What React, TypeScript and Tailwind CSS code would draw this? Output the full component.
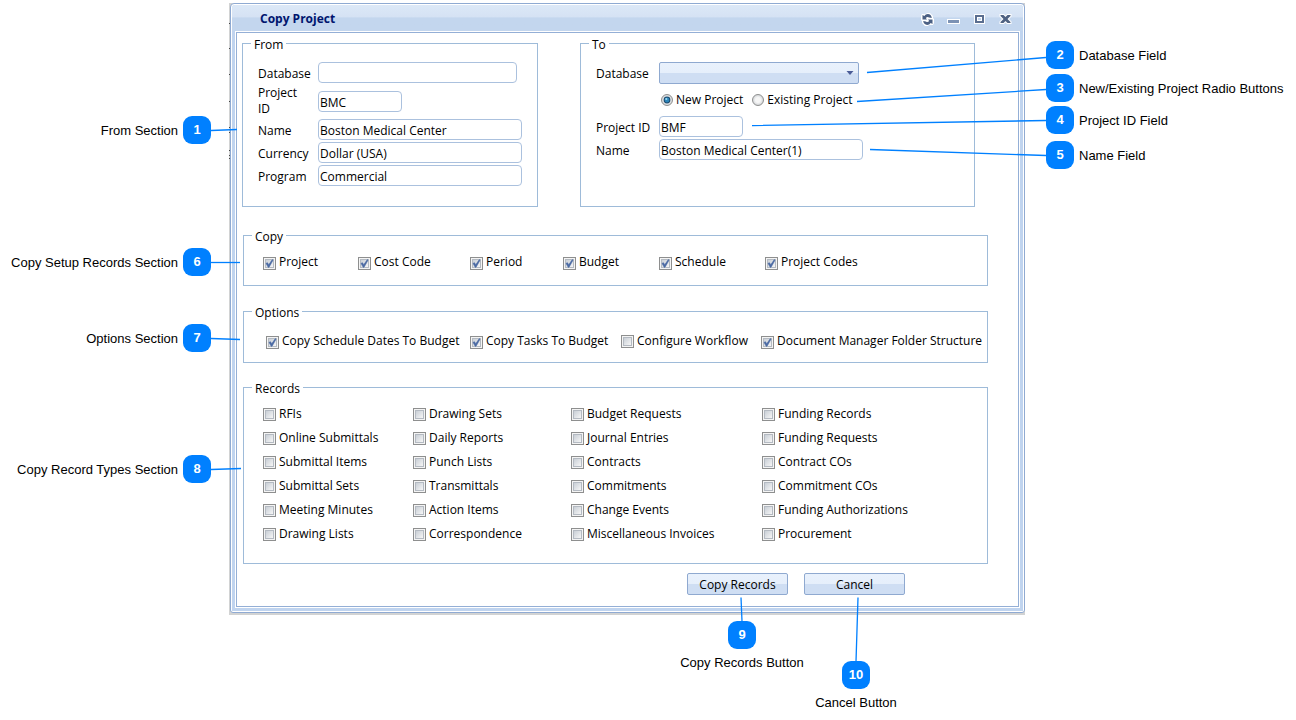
import type { ReactNode } from 'react';

type CheckItem = { label: string; checked?: boolean };

const copyItems: CheckItem[] = [
  { label: 'Project', checked: true },
  { label: 'Cost Code', checked: true },
  { label: 'Period', checked: true },
  { label: 'Budget', checked: true },
  { label: 'Schedule', checked: true },
  { label: 'Project Codes', checked: true },
];

const optionItems: CheckItem[] = [
  { label: 'Copy Schedule Dates To Budget', checked: true },
  { label: 'Copy Tasks To Budget', checked: true },
  { label: 'Configure Workflow' },
  { label: 'Document Manager Folder Structure', checked: true },
];

const recordItems = [
  'RFIs', 'Drawing Sets', 'Budget Requests', 'Funding Records',
  'Online Submittals', 'Daily Reports', 'Journal Entries', 'Funding Requests',
  'Submittal Items', 'Punch Lists', 'Contracts', 'Contract COs',
  'Submittal Sets', 'Transmittals', 'Commitments', 'Commitment COs',
  'Meeting Minutes', 'Action Items', 'Change Events', 'Funding Authorizations',
  'Drawing Lists', 'Correspondence', 'Miscellaneous Invoices', 'Procurement',
];

const Group = ({ title, className, children }: { title: string; className: string; children: ReactNode }) => (
  <fieldset className={`relative border border-[#9ebbd9] ${className}`}>
    <legend className="absolute -top-[7px] left-2 bg-white px-[3px] leading-4">{title}</legend>
    {children}
  </fieldset>
);

const Check = ({ label, checked = false }: CheckItem) => (
  <label className="flex items-center gap-[3px] whitespace-nowrap">
    <span className={checked ? 'relative mt-[3px] size-[13px] shrink-0' : 'relative size-[13px] shrink-0'}>
      <input
        type="checkbox"
        defaultChecked={checked}
        className="peer block size-[13px] appearance-none border border-[#8e8f8f] bg-[#f4f4f4]"
      />
      <span className="pointer-events-none absolute inset-[2px] border border-[#b4bac2] bg-linear-to-br from-[#c9cfd6] to-[#f6f6f6]" />
      <svg
        viewBox="0 0 13 13"
        className="pointer-events-none absolute inset-0 hidden size-[13px] peer-checked:block"
      >
        <path d="M3 6.3 4.6 5.8 5.7 7.8 9.3 2.6 10 3.2 6 10.3 5.2 10.3Z" fill="#4a69a3" stroke="#4a69a3" strokeWidth="0.6" />
      </svg>
    </span>
    {label}
  </label>
);

const Field = ({ id, label, value, width }: { id: string; label: string; value: string; width: string }) => (
  <>
    <label htmlFor={id} className="pt-0.5 leading-4">
      {label}
    </label>
    <input
      id={id}
      type="text"
      defaultValue={value}
      className={`h-[21px] rounded-[4px] border border-[#abc1de] bg-white pt-0.5 pl-px ${width}`}
    />
  </>
);

const Radio = ({ label, checked = false }: CheckItem) => (
  <label className="flex items-center gap-[3px] whitespace-nowrap">
    <span className="relative size-3 shrink-0">
      <input
        type="radio"
        name="projectMode"
        defaultChecked={checked}
        className="peer block size-3 appearance-none rounded-full border border-[#8e8f8f] bg-[radial-gradient(circle,#f6f6f6_35%,#cdd0d3_80%)]"
      />
      <svg viewBox="0 0 12 12" className="pointer-events-none absolute inset-0 hidden size-3 peer-checked:block">
        <circle cx="6" cy="6" r="3.4" fill="#1d4a6e" />
        <circle cx="6" cy="6" r="2.4" fill="#2c86ba" />
        <circle cx="5.3" cy="5" r="1.1" fill="#9bd9f2" />
      </svg>
    </span>
    {label}
  </label>
);

const WindowButton = ({ label, children }: { label: string; children: ReactNode }) => (
  <button type="button" aria-label={label} className="size-[13px]">
    <svg viewBox="0 0 13 13" className="size-[13px]">
      {children}
    </svg>
  </button>
);

const TitleBar = () => (
  <header className="flex h-[26px] items-center justify-between rounded-t-[3px] bg-linear-to-b from-[#dce8f7] from-0% via-[#d5e2f4] via-45% to-[#c3d6ee] to-50% pr-[11px] pl-7">
    <h1 className="pt-0.5 font-bold text-[#00156e]">Copy Project</h1>
    <div className="flex gap-[13px] pt-[3px]">
      <WindowButton label="Reload">
        <path d="M1 1h4l1-1h3l3 3v2l1 1v4l-1 2H8l-1 1H4L1 10V8L0 7V3z" fill="#fff" />
        <path d="M1.5 2v4.5H6L4.8 5Q6.5 3.4 8 4.6L10.8 5Q10.2 1.2 6.8 1.1 4.6 1.1 3.3 3.1Z" fill="#4b6084" />
        <path d="M11.5 11V6.5H7L8.2 8Q6.5 9.6 5 8.4L2.2 8Q2.8 11.8 6.2 11.9 8.4 11.9 9.7 9.9Z" fill="#4b6084" />
      </WindowButton>
      <WindowButton label="Minimize">
        <rect x="0" y="6" width="13" height="5" fill="#fff" />
        <rect x="1" y="7" width="11" height="3" fill="#7c92b4" />
      </WindowButton>
      <WindowButton label="Maximize">
        <rect x="1" y="1" width="11" height="10" fill="#fff" />
        <rect x="2" y="2" width="9" height="8" fill="#5a6e90" />
        <rect x="4" y="4" width="5" height="4" fill="#fff" />
        <rect x="5" y="5" width="3" height="2" fill="#c3d6ee" />
      </WindowButton>
      <WindowButton label="Close">
        <path d="M0.5 1h4.5l1.5 1.5L8 1h4.5v2.5L10 6l2.5 2.5V11H8L6.5 9.5 5 11H.5V8.5L3 6 .5 3.5z" fill="#fff" />
        <path d="M1.5 2h3l2 2 2-2h3v1L8.5 6l3 3v1h-3l-2-2-2 2h-3V9l3-3-3-3z" fill="#4f6282" />
      </WindowButton>
    </div>
  </header>
);

const glossy =
  'rounded-[2px] border border-[#8fa9d0] bg-linear-to-b from-[#e9f1fc] from-0% via-[#e6effb] via-48% to-[#cfdef3] to-52%';

const CopyDialog = () => (
  <div className="bg-[#d2d3d3] pb-0.5 pl-px">
    <div className="rounded-t-[4px] rounded-b-[3px] border border-[#8faad2] bg-white p-px">
      <div className="rounded-t-[3px] bg-[#c0d4ef]">
        <TitleBar />
        <div className="px-[3px] pb-[3px]">
          <div className="border border-white">
            <form className="border border-[#94afd6] bg-white pb-[11px]">
              <div className="mt-[10px] mr-[43px] ml-[5px] flex gap-[42px]">
                <Group title="From" className="w-[296px] shrink-0 pt-[18px] pb-5 pl-[15px]">
                  <div className="grid grid-cols-[60px_204px] items-center gap-y-0.5">
                    <Field id="fromDatabase" label="Database" value="" width="w-[199px]" />
                    <label htmlFor="fromProjectId" className="w-10 leading-4">
                      Project ID
                    </label>
                    <input
                      id="fromProjectId"
                      type="text"
                      defaultValue="BMC"
                      className="h-[21px] w-[84px] rounded-[4px] border border-[#abc1de] bg-white pt-0.5 pl-px"
                    />
                    <Field id="fromName" label="Name" value="Boston Medical Center" width="w-[204px]" />
                    <Field id="fromCurrency" label="Currency" value="Dollar (USA)" width="w-[204px]" />
                    <Field id="fromProgram" label="Program" value="Commercial" width="w-[204px]" />
                  </div>
                </Group>
                <Group title="To" className="flex-1 pt-[18px] pl-[15px]">
                  <div className="grid grid-cols-[63px_204px] items-center gap-y-0.5">
                    <label htmlFor="toDatabase" className="pt-px leading-4">
                      Database
                    </label>
                    <div className="relative w-[200px]">
                      <select id="toDatabase" className={`block h-[22px] w-full appearance-none ${glossy}`}>
                        <option value="" />
                      </select>
                      <svg viewBox="0 0 8 5" className="pointer-events-none absolute top-[9px] right-[5px] h-[5px] w-2">
                        <path d="M0.5 0h7L4 4z" fill="#4a5c97" />
                      </svg>
                    </div>
                    <div className="col-start-2 flex h-7 items-center gap-[9px] pl-0.5">
                      <Radio label="New Project" checked />
                      <Radio label="Existing Project" />
                    </div>
                    <Field id="toProjectId" label="Project ID" value="BMF" width="w-[84px]" />
                    <Field id="toName" label="Name" value="Boston Medical Center(1)" width="w-[204px]" />
                  </div>
                </Group>
              </div>

              <div className="mr-[30px] ml-[6px]">
                <Group title="Copy" className="mt-7 pt-[17px] pb-4 pl-[19px]">
                  <div className="grid h-4 grid-cols-[95px_112px_93px_96px_106px_auto] items-center">
                    {copyItems.map((item) => (
                      <Check key={item.label} {...item} />
                    ))}
                  </div>
                </Group>
                <Group title="Options" className="mt-[25px] pt-5 pb-[14px] pl-[22px]">
                  <div className="grid h-4 grid-cols-[204px_151px_140px_auto] items-center">
                    {optionItems.map((item) => (
                      <Check key={item.label} {...item} />
                    ))}
                  </div>
                </Group>
                <Group title="Records" className="mt-6 pt-[14px] pb-[17px] pl-[19px]">
                  <div className="grid auto-rows-[24px] grid-cols-[150px_158px_191px_auto] items-center">
                    {recordItems.map((label) => (
                      <Check key={label} label={label} />
                    ))}
                  </div>
                </Group>
              </div>

              <div className="mt-[9px] mr-[113px] flex justify-end gap-4">
                <button type="button" className={`h-[22px] w-[101px] pt-px ${glossy}`}>
                  Copy Records
                </button>
                <button type="button" className={`h-[22px] w-[101px] pt-px ${glossy}`}>
                  Cancel
                </button>
              </div>
            </form>
          </div>
        </div>
      </div>
    </div>
  </div>
);

const Badge = ({ n }: { n: number }) => (
  <span className="flex size-7 shrink-0 items-center justify-center rounded-[9px] bg-[#0080ff] font-bold text-white">
    {n}
  </span>
);

const leftNotes = [
  { n: 1, text: 'From Section', top: 'top-[116px]' },
  { n: 6, text: 'Copy Setup Records Section', top: 'top-[248px]' },
  { n: 7, text: 'Options Section', top: 'top-[324px]' },
  { n: 8, text: 'Copy Record Types Section', top: 'top-[455px]' },
];

const rightNotes = [
  { n: 2, text: 'Database Field', top: 'top-[41px]' },
  { n: 3, text: 'New/Existing Project Radio Buttons', top: 'top-[74px]' },
  { n: 4, text: 'Project ID Field', top: 'top-[106px]' },
  { n: 5, text: 'Name Field', top: 'top-[141px]' },
];

const bottomNotes = [
  { n: 9, text: 'Copy Records Button', place: 'top-[621px] left-[742px]' },
  { n: 10, text: 'Cancel Button', place: 'top-[661px] left-[856px]' },
];

// x1, y1, x2, y2 of each leader line
const leaders = [
  [211, 130, 237, 129],
  [211, 262, 240, 262],
  [211, 338, 240, 339],
  [211, 469, 241, 468],
  [1046, 57, 867, 72],
  [1046, 89, 857, 101],
  [1046, 120, 752, 125],
  [1046, 155, 870, 149],
  [742, 621, 741, 597],
  [856, 661, 858, 597],
];

// specks of the page behind, along the dialog's left edge
const specks = [23, 48, 74, 101, 127, 132, 150, 155, 158];

export default function App() {
  return (
    <main className="relative flex min-h-screen items-start bg-white pt-[3px] font-['Open_Sans','Noto_Sans',sans-serif] text-[12px] text-black">
      <div className="w-[229px] shrink-0" />
      <div className="min-w-0 flex-1">
        <CopyDialog />
      </div>
      <div className="w-[271px] shrink-0" />

      <svg className="pointer-events-none absolute top-0 left-0 h-[720px] w-[1296px]" viewBox="0 0 1296 720">
        {specks.map((y) => (
          <rect key={y} x="229" y={y} width="1" height="1" fill="#444" />
        ))}
        {leaders.map(([x1, y1, x2, y2]) => (
          <line key={`${x1}-${y1}`} x1={x1} y1={y1 + 0.5} x2={x2} y2={y2 + 0.5} stroke="#0080ff" strokeWidth="1.3" />
        ))}
      </svg>

      <div className="font-['Liberation_Sans',Arial,sans-serif] text-[13px]">
        {leftNotes.map(({ n, text, top }) => (
          <div key={n} className={`absolute left-0 flex w-[211px] items-center justify-end gap-[5px] ${top}`}>
            <span className="pt-0.5">{text}</span>
            <Badge n={n} />
          </div>
        ))}
        {rightNotes.map(({ n, text, top }) => (
          <div key={n} className={`absolute right-0 flex w-[250px] items-center gap-[5px] whitespace-nowrap ${top}`}>
            <Badge n={n} />
            <span className="pt-0.5">{text}</span>
          </div>
        ))}
        {bottomNotes.map(({ n, text, place }) => (
          <div key={n} className={`absolute flex w-40 -translate-x-1/2 flex-col items-center gap-1 ${place}`}>
            <Badge n={n} />
            <span>{text}</span>
          </div>
        ))}
      </div>
    </main>
  );
}
